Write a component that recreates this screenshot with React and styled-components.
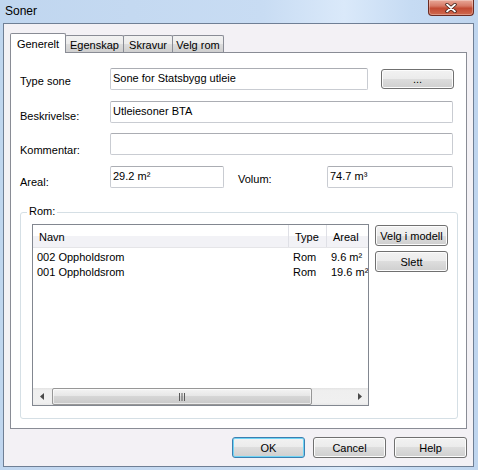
import React from 'react'
import styled, { createGlobalStyle } from 'styled-components'

const GlobalStyle = createGlobalStyle`
  html, body {
    margin: 0;
    padding: 0;
    background: #c3d7ef;
  }
  body {
    font-family: "Liberation Sans", Arial, sans-serif;
    font-size: 11px;
    color: #000;
  }
`

const Window = styled.div`
  width: 478px;
  height: 470px;
  box-sizing: border-box;
  display: flex;
  flex-direction: column;
  padding: 0 4px 3px 3px;
  background: linear-gradient(to right, #c0d6ef 0%, #c8dcf3 55%, #dae9fa 72%, #c6dbf3 86%, #bfd5ee 100%);
`

const TitleBar = styled.div`
  height: 23px;
  flex: none;
  display: flex;
  align-items: flex-start;
`

const Title = styled.div`
  font-size: 12px;
  line-height: 22px;
  padding-left: 2px;
`

const CloseButton = styled.div`
  margin-left: auto;
  width: 46px;
  height: 16px;
  box-sizing: border-box;
  border: 1px solid #6b2b22;
  border-top: none;
  border-radius: 0 0 4px 4px;
  background: linear-gradient(#e9a898 0%, #d67966 40%, #c24a33 55%, #cf6a4f 100%);
  box-shadow: inset 0 0 0 1px rgba(255, 255, 255, 0.3);
  display: flex;
  align-items: center;
  justify-content: center;
`

const Client = styled.div`
  flex: 1;
  min-height: 0;
  display: flex;
  flex-direction: column;
  border: 1px solid #6f7f95;
  background: #f3f1f5;
  padding: 9px 6px 8px 6px;
`

const TabStrip = styled.div`
  height: 19px;
  flex: none;
  display: flex;
  align-items: flex-end;
  position: relative;
  z-index: 1;
`

const Tab = styled.div`
  width: ${p => p.$w}px;
  height: ${p => (p.$active ? 20 : 17)}px;
  margin-bottom: ${p => (p.$active ? -1 : 0)}px;
  margin-left: ${p => (p.$first ? 0 : -1)}px;
  box-sizing: border-box;
  border: 1px solid #898c95;
  border-bottom: none;
  border-radius: 2px 2px 0 0;
  position: relative;
  z-index: ${p => (p.$active ? 2 : 1)};
  background: ${p =>
    p.$active ? '#fff' : 'linear-gradient(#f2f2f2 0%, #ebebeb 50%, #dddddd 50%, #cfcfcf 100%)'};
  display: flex;
  align-items: center;
  justify-content: center;
  padding-top: ${p => (p.$active ? 0 : 1)}px;
  white-space: nowrap;
`

const Panel = styled.div`
  height: 377px;
  flex: none;
  box-sizing: border-box;
  border: 1px solid #898c95;
  background: #fff;
  padding: 15px 0 0 9px;
`

const Row = styled.div`
  display: flex;
  height: 22px;
  margin-top: ${p => p.$top || 0}px;
`

const Label = styled.div`
  width: ${p => p.$w || 90}px;
  flex: none;
  line-height: 13px;
  padding-top: ${p => p.$off}px;
  box-sizing: border-box;
  white-space: nowrap;
`

const TextBox = styled.div`
  width: ${p => p.$w}px;
  height: 22px;
  flex: none;
  box-sizing: border-box;
  border: 1px solid #c9ccd2;
  border-top-color: #abadb3;
  border-radius: 2px;
  background: #fff;
  padding: 3px 2px 0;
  line-height: 13px;
  white-space: nowrap;
  overflow: hidden;
`

const Button = styled.button`
  width: 73px;
  height: ${p => p.$h || 21}px;
  flex: none;
  box-sizing: border-box;
  margin: ${p => p.$m || '0'};
  padding: 0;
  font-family: "Liberation Sans", Arial, sans-serif;
  font-size: 11px;
  color: #000;
  border: 1px solid ${p => (p.$default ? '#3c7fb1' : '#707070')};
  border-radius: 3px;
  background: linear-gradient(#f2f2f2 0%, #ebebeb 50%, #dddddd 50%, #cfcfcf 100%);
  box-shadow: inset 0 0 0 1px ${p => (p.$default ? '#6fd4f5' : '#fcfcfc')};
`

const GroupBox = styled.div`
  position: relative;
  width: 438px;
  height: 207px;
  margin-top: 24px;
  box-sizing: border-box;
  border: 1px solid #d5dfe5;
  border-radius: 3px;
  padding: 11px;
  display: flex;
  align-items: flex-start;
  gap: 6px;
`

const Legend = styled.span`
  position: absolute;
  top: -8px;
  left: 6px;
  padding: 0 2px;
  background: #fff;
  line-height: 13px;
`

const ListView = styled.div`
  width: 337px;
  height: 182px;
  flex: none;
  box-sizing: border-box;
  border: 1px solid #828790;
  background: #fff;
  display: flex;
  flex-direction: column;
  overflow: hidden;
`

const Header = styled.div`
  display: flex;
  height: 23px;
  flex: none;
  box-sizing: border-box;
  border-bottom: 1px solid #e5e5e8;
  background: linear-gradient(#ffffff 50%, #f2f2f6 50%);
`

const HeaderCell = styled.div`
  width: ${p => p.$w}px;
  flex: none;
  box-sizing: border-box;
  border-right: 1px solid #dfe0e6;
  padding: 2px 0 0 6px;
  display: flex;
  align-items: center;
  white-space: nowrap;
`

const Rows = styled.div`
  flex: 1;
  padding-top: 2px;
`

const ListRow = styled.div`
  display: flex;
  height: 15px;
  line-height: 15px;
  white-space: nowrap;
`

const Cell = styled.div`
  width: ${p => p.$w}px;
  flex: none;
  box-sizing: border-box;
  padding-left: 4px;
`

const Scrollbar = styled.div`
  display: flex;
  height: 17px;
  flex: none;
  background: linear-gradient(#e3e3e3 0%, #efefef 15%, #f0f0f0 85%, #e8e8e8 100%);
`

const ScrollArrow = styled.div`
  width: 17px;
  flex: none;
  display: flex;
  align-items: center;
  justify-content: center;
`

const Track = styled.div`
  flex: 1;
  display: flex;
  padding-left: 2px;
`

const Thumb = styled.div`
  width: 260px;
  box-sizing: border-box;
  border: 1px solid #979797;
  border-radius: 2px;
  background: linear-gradient(#f4f4f4 0%, #e7e7e7 45%, #d6d6d6 50%, #c9c9c9 100%);
  box-shadow: inset 0 0 0 1px rgba(255, 255, 255, 0.6);
  display: flex;
  align-items: center;
  justify-content: center;
`

const SideButtons = styled.div`
  display: flex;
  flex-direction: column;
  gap: 5px;
  padding-top: 1px;
`

const ButtonBar = styled.div`
  display: flex;
  justify-content: flex-end;
  gap: 8px;
  margin-top: 8px;
`

const CloseGlyph = () => (
  <svg width="12" height="10" viewBox="0 0 12 10">
    <path d="M2 1.5 L10 8.5 M10 1.5 L2 8.5" stroke="#3b1a12" strokeWidth="3.4" strokeLinecap="round" />
    <path d="M2 1.5 L10 8.5 M10 1.5 L2 8.5" stroke="#fff" strokeWidth="1.8" strokeLinecap="round" />
  </svg>
)

const Arrow = ({ dir }) => (
  <svg width="4" height="7" viewBox="0 0 4 7">
    <path d={dir === 'left' ? 'M4 0 L0 3.5 L4 7 Z' : 'M0 0 L4 3.5 L0 7 Z'} fill="#4a4a4a" />
  </svg>
)

const Grip = () => (
  <svg width="8" height="8" viewBox="0 0 8 8">
    <path d="M1.5 0 V8 M4 0 V8 M6.5 0 V8" stroke="#5a5a5a" strokeWidth="1" />
  </svg>
)

const tabs = [
  { label: 'Generelt', w: 56 },
  { label: 'Egenskap', w: 59 },
  { label: 'Skravur', w: 50 },
  { label: 'Velg rom', w: 52 },
]

const columns = [
  { label: 'Navn', w: 256 },
  { label: 'Type', w: 38 },
  { label: 'Areal', w: 60 },
]

const rooms = [
  ['002 Oppholdsrom', 'Rom', '9.6 m²'],
  ['001 Oppholdsrom', 'Rom', '19.6 m²'],
]

export default function App() {
  return (
    <>
      <GlobalStyle />
      <Window>
        <TitleBar>
          <Title>Soner</Title>
          <CloseButton>
            <CloseGlyph />
          </CloseButton>
        </TitleBar>

        <Client>
          <TabStrip>
            {tabs.map((t, i) => (
              <Tab key={t.label} $w={t.w} $first={i === 0} $active={i === 0}>
                {t.label}
              </Tab>
            ))}
          </TabStrip>

          <Panel>
            <Row>
              <Label $off={7}>Type sone</Label>
              <TextBox $w={258}>Sone for Statsbygg utleie</TextBox>
              <Button $h={20} $m="1px 0 0 13px">...</Button>
            </Row>
            <Row $top={11}>
              <Label $off={9}>Beskrivelse:</Label>
              <TextBox $w={343}>Utleiesoner BTA</TextBox>
            </Row>
            <Row $top={10}>
              <Label $off={11}>Kommentar:</Label>
              <TextBox $w={343}></TextBox>
            </Row>
            <Row $top={11}>
              <Label $off={10}>Areal:</Label>
              <TextBox $w={114}>29.2 m²</TextBox>
              <Label $off={7} $w={103} style={{ paddingLeft: 14 }}>Volum:</Label>
              <TextBox $w={126}>74.7 m³</TextBox>
            </Row>

            <GroupBox>
              <Legend>Rom:</Legend>
              <ListView>
                <Header>
                  {columns.map(c => (
                    <HeaderCell key={c.label} $w={c.w}>{c.label}</HeaderCell>
                  ))}
                </Header>
                <Rows>
                  {rooms.map(r => (
                    <ListRow key={r[0]}>
                      {r.map((v, i) => (
                        <Cell key={i} $w={columns[i].w}>{v}</Cell>
                      ))}
                    </ListRow>
                  ))}
                </Rows>
                <Scrollbar>
                  <ScrollArrow>
                    <Arrow dir="left" />
                  </ScrollArrow>
                  <Track>
                    <Thumb>
                      <Grip />
                    </Thumb>
                  </Track>
                  <ScrollArrow>
                    <Arrow dir="right" />
                  </ScrollArrow>
                </Scrollbar>
              </ListView>
              <SideButtons>
                <Button>Velg i modell</Button>
                <Button>Slett</Button>
              </SideButtons>
            </GroupBox>
          </Panel>

          <ButtonBar>
            <Button $default>OK</Button>
            <Button>Cancel</Button>
            <Button>Help</Button>
          </ButtonBar>
        </Client>
      </Window>
    </>
  )
}
